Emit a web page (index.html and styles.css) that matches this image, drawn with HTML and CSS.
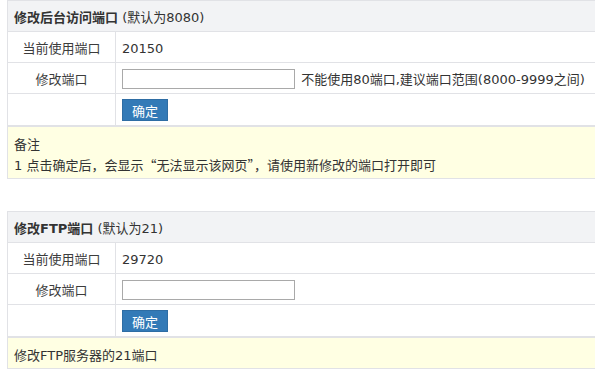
FILE: index.html
```html
<!DOCTYPE html>
<html lang="zh-CN">
<head>
  <meta charset="UTF-8">
  <title>端口设置</title>
  <link rel="stylesheet" href="styles.css">
</head>
<body>

  <div class="panel">
    <table class="port-table">
      <tr class="head">
        <th colspan="2"><b>修改后台访问端口</b> (默认为8080)</th>
      </tr>
      <tr>
        <td class="label">当前使用端口</td>
        <td>20150</td>
      </tr>
      <tr>
        <td class="label">修改端口</td>
        <td><input type="text" class="port-input"> 不能使用80端口,建议端口范围(8000-9999之间)</td>
      </tr>
      <tr class="btn-row">
        <td class="label"></td>
        <td><button class="btn">确定</button></td>
      </tr>
    </table>
    <div class="note">
      备注<br>
      1 点击确定后，会显示<span class="cjk">“无法显示该网页”，</span>请使用新修改的端口打开即可
    </div>
  </div>

  <div class="panel">
    <table class="port-table">
      <tr class="head">
        <th colspan="2"><b>修改FTP端口</b> (默认为21)</th>
      </tr>
      <tr>
        <td class="label">当前使用端口</td>
        <td>29720</td>
      </tr>
      <tr>
        <td class="label">修改端口</td>
        <td><input type="text" class="port-input"></td>
      </tr>
      <tr class="btn-row">
        <td class="label"></td>
        <td><button class="btn">确定</button></td>
      </tr>
    </table>
    <div class="note">修改FTP服务器的21端口</div>
  </div>

</body>
</html>
```

FILE: styles.css
```css
html {
  overflow: hidden;
}
body {
  margin: 0;
  font-family: "DejaVu Sans", "Noto Sans CJK SC", sans-serif;
  font-size: 13px;
  color: #333;
}
.panel {
  margin-left: 7px;
  width: 620px;
  margin-bottom: 32px;
}
.port-table {
  width: 100%;
  border-collapse: collapse;
  border: 1px solid #e1e2e6;
}
.port-table th,
.port-table td {
  border-bottom: 1px solid #e1e2e6;
  padding: 4px 6px 0;
  line-height: 26px;
  text-align: left;
  font-weight: normal;
}
.head th {
  background-color: #f2f3f5;
}
.head b {
  font-weight: bold;
}
.port-table td.label {
  width: 95px;
  text-align: center;
  border-right: 1px solid #e1e2e6;
  color: #3c3c3c;
}
.port-table .btn-row td {
  padding: 5px 6px 4px;
  line-height: 22px;
}
.port-input {
  width: 167px;
  height: 16px;
  margin: 2px 2px 0 0;
  padding: 1px 2px;
  border: 1px solid #a9a9a9;
  vertical-align: top;
  font-size: 13px;
}
.btn {
  display: block;
  width: 46px;
  height: 22px;
  padding: 0;
  background-color: #337ab7;
  border: 1px solid #2e6da4;
  color: white;
  font-family: "Noto Sans CJK SC", sans-serif;
  font-size: 13px;
}
.note {
  background-color: #ffffe3;
  border: 1px solid #e1e2e6;
  border-top: 2px solid #e1e2e6;
  margin-top: -1px;
  padding: 8px 6px 2px;
  line-height: 20px;
}
.cjk {
  font-family: "Noto Sans CJK SC", sans-serif;
  font-feature-settings: "fwid";
}
```
